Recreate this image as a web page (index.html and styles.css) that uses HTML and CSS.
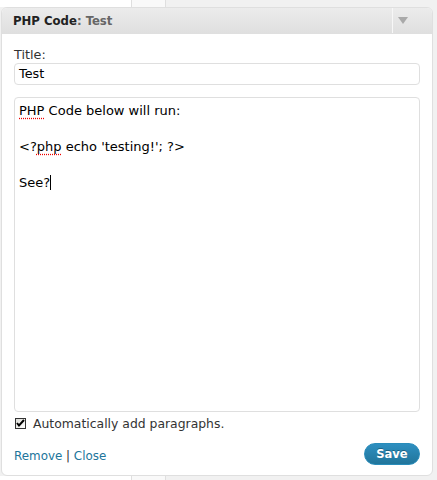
FILE: index.html
```html
<!DOCTYPE html>
<html>
<head>
<meta charset="utf-8">
<link rel="stylesheet" href="styles.css">
</head>
<body>
<div class="strip strip-top"><div class="c1"></div><div class="c2"></div><div class="c3"></div></div>
<div class="widget">
  <div class="widget-top">
    <h4 class="widget-title">PHP Code<span class="in-title">: Test</span></h4>
    <div class="toggle"><svg width="10" height="7" viewBox="0 0 10 7"><path d="M0 0H10L5 7Z" fill="#a9a9a9"/></svg></div>
  </div>
  <div class="widget-inside">
    <label class="field-label">Title:</label>
    <div class="input">Test</div>
    <div class="textarea">
      <div class="line"><span class="sp">PHP</span> Code below will run:</div>
      <div class="line">&nbsp;</div>
      <div class="line">&lt;?<span class="sp">php</span> echo 'testing!'; ?&gt;</div>
      <div class="line">&nbsp;</div>
      <div class="line">See?<span class="caret"></span></div>
    </div>
    <div class="check-row">
      <span class="checkbox"><svg width="9" height="9" viewBox="0 0 9 9"><path d="M1 4 L3 6.5 L8 1" fill="none" stroke="#000" stroke-width="2"/></svg></span>
      <span class="check-label">Automatically add paragraphs.</span>
    </div>
    <div class="controls">
      <div class="links"><a class="link">Remove</a> | <a class="link">Close</a></div>
      <button class="save">Save</button>
    </div>
  </div>
</div>
<div class="strip strip-bottom"><div class="c1"></div><div class="c2"></div><div class="c3"></div></div>
</body>
</html>
```
FILE: styles.css
```css
html, body {
  margin: 0;
  padding: 0;
  background: #f1f1f1;
  font-family: "DejaVu Sans", Verdana, sans-serif;
  color: #333;
  width: 437px;
  height: 480px;
  overflow: hidden;
}
.strip {
  display: flex;
  height: 7px;
}
.strip-bottom {
  height: 5px;
}
.strip .c1 { width: 131px; background: #fff; border-right: 1px solid #dfdfdf; }
.strip .c2 { width: 33px; background: #f9f9f9; border-right: 1px solid #dfdfdf; }
.strip .c3 { flex: 1; background: #f1f1f1; }
.widget {
  margin-left: 1px;
  width: 430px;
  border: 1px solid #dfdfdf;
  border-radius: 6px;
  background: #fff;
  overflow: hidden;
  height: 467px;
  display: flex;
  flex-direction: column;
}
.widget-top {
  height: 25px;
  display: flex;
  align-items: center;
  background: linear-gradient(#ececec, #dfdfdf);
  border-bottom: 1px solid #dfdfdf;
}
.widget-title {
  margin: 0;
  flex: 1;
  padding-left: 11px;
  font-size: 13px;
  font-weight: bold;
  color: #222;
  font-family: "DejaVu Sans Condensed", "DejaVu Sans", Verdana, sans-serif;
}
.in-title { color: #666; }
.toggle {
  width: 40px;
  height: 25px;
  border-left: 1px solid #f7f7f7;
  display: flex;
  align-items: center;
  justify-content: flex-start;
  padding-left: 5px;
  box-sizing: border-box;
}
.widget-inside {
  flex: 1;
  padding: 14px 12px 0 12px;
  display: flex;
  flex-direction: column;
}
.field-label {
  font-size: 12.8px;
  line-height: 14px;
  color: #333;
  display: block;
  margin-bottom: 1px;
}
.input {
  height: 20px;
  border: 1px solid #dfdfdf;
  border-radius: 4px;
  font-size: 12.8px;
  line-height: 20px;
  padding-left: 4px;
  color: #000;
  margin-bottom: 12px;
}
.textarea {
  height: 309px;
  border: 1px solid #dfdfdf;
  border-radius: 4px;
  padding: 4px 4px 0 4px;
  font-size: 13px;
  line-height: 18px;
  color: #000;
}
.line { height: 18px; }
.sp {
  text-decoration: underline dotted #e00;
  text-underline-offset: 3px;
}
.caret {
  display: inline-block;
  width: 1px;
  height: 15px;
  background: #000;
  vertical-align: -3px;
}
.check-row {
  display: flex;
  align-items: center;
  margin-top: 3px;
  height: 16px;
}
.checkbox {
  width: 11px;
  height: 11px;
  box-sizing: border-box;
  border: 1px solid #333;
  background: linear-gradient(135deg, #dcdcd7, #fff);
  display: flex;
  align-items: center;
  justify-content: center;
  margin-left: 1px;
  margin-right: 7px;
}
.check-label {
  font-size: 12.4px;
  color: #333;
}
.controls {
  display: flex;
  align-items: center;
  justify-content: space-between;
  margin-top: 12px;
}
.links {
  font-size: 11.9px;
  color: #333;
  padding-top: 4px;
}
.link {
  color: #21759b;
}
.save {
  width: 56px;
  height: 22px;
  border: 1px solid #298cba;
  border-radius: 11px;
  background: linear-gradient(#2e8fc0, #21759b);
  color: #fff;
  font-family: "DejaVu Sans", Verdana, sans-serif;
  font-weight: bold;
  font-size: 11.5px;
  padding: 0;
  text-shadow: 0 -1px 0 rgba(0,0,0,0.3);
}
```
